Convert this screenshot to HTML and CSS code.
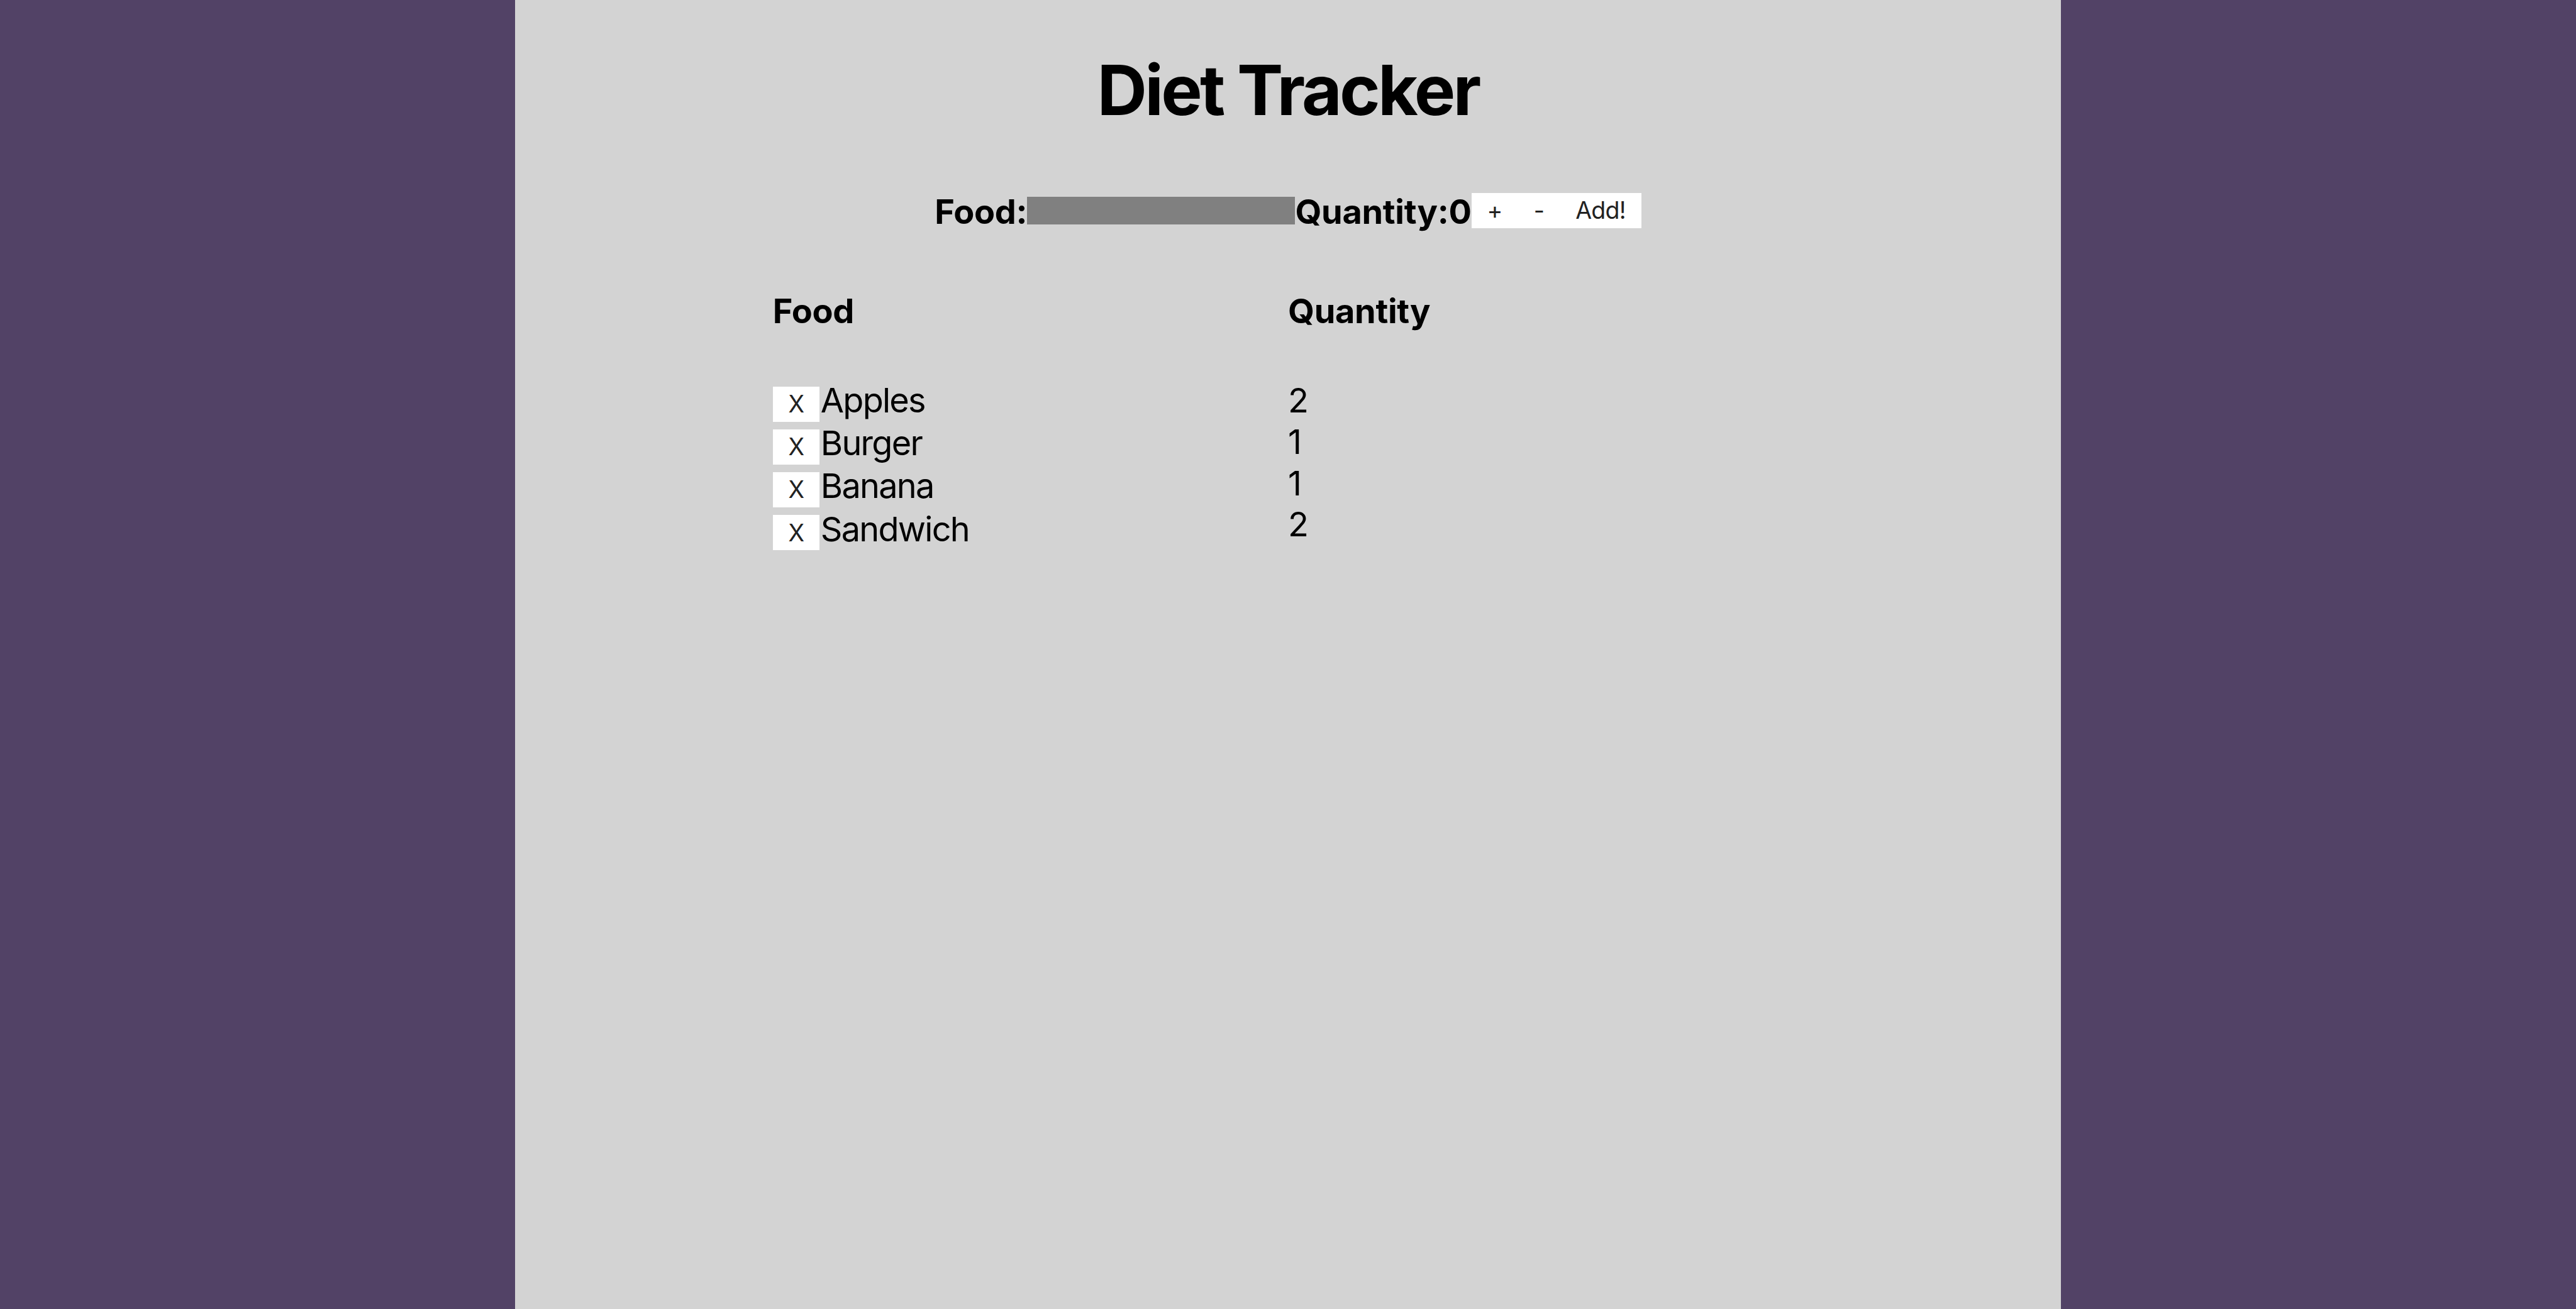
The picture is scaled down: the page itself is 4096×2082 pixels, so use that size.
FILE: index.html
```html
<!DOCTYPE html>
<html lang="en">
<head>
<meta charset="utf-8">
<title>Diet Tracker</title>
<link rel="stylesheet" href="styles.css">
</head>
<body>
<main class="panel">
  <h1 class="title">Diet Tracker</h1>
  <form class="entry">
    <label class="label" for="food">Food:</label>
    <input class="food-input" id="food" type="text">
    <span class="label">Quantity:0</span>
    <div class="btn-group">
      <button type="button" class="btn">+</button>
      <button type="button" class="btn">-</button>
      <button type="button" class="btn">Add!</button>
    </div>
  </form>
  <section class="lists">
    <div class="col">
      <h2 class="col-head">Food</h2>
      <ul class="food-list">
        <li class="food-item"><button type="button" class="btn">X</button><span class="food-name">Apples</span></li>
        <li class="food-item"><button type="button" class="btn">X</button><span class="food-name">Burger</span></li>
        <li class="food-item"><button type="button" class="btn">X</button><span class="food-name">Banana</span></li>
        <li class="food-item"><button type="button" class="btn">X</button><span class="food-name">Sandwich</span></li>
      </ul>
    </div>
    <div class="col">
      <h2 class="col-head">Quantity</h2>
      <ul class="qty-list">
        <li class="qty-item">2</li>
        <li class="qty-item">1</li>
        <li class="qty-item">1</li>
        <li class="qty-item">2</li>
      </ul>
    </div>
  </section>
</main>
</body>
</html>
```

FILE: styles.css
```css
html, body {
  margin: 0;
  padding: 0;
}

body {
  background: #524266;
  font-family: Inter, "Noto Sans", "Liberation Sans", sans-serif;
  font-size: 54px;
  letter-spacing: -0.032em;
  color: #000;
}

.panel {
  width: 60%;
  margin: 0 auto;
  min-height: 100vh;
  background: #d3d3d3;
  padding-top: 77px;
  box-sizing: border-box;
}

.title {
  margin: 0;
  font-size: 110px;
  line-height: 133px;
  font-weight: 700;
  letter-spacing: -0.034em;
  text-align: center;
}

.entry {
  margin: 94px 0 0;
  display: flex;
  justify-content: center;
  align-items: center;
  height: 65px;
}

.label {
  font-weight: 700;
  line-height: 65px;
  letter-spacing: -0.005em;
}

.food-input {
  width: 426px;
  height: 44px;
  margin: -4px 0 0;
  padding: 0;
  border: none;
  background: #808080;
  box-sizing: border-box;
  font: inherit;
}

.btn-group {
  display: flex;
  background: #fff;
  margin-top: -4px;
}

.btn {
  height: 56px;
  padding: 0 25px;
  border: none;
  margin: 0;
  background: #fff;
  color: #222;
  font-family: Inter, "Noto Sans", sans-serif;
  font-size: 37.5px;
  letter-spacing: -0.02em;
  line-height: 45px;
}

.lists {
  width: 66.667%;
  margin: 93px auto 0;
  display: grid;
  grid-template-columns: 1fr 1fr;
}

.col-head {
  margin: 0;
  font-size: 54px;
  line-height: 65px;
  font-weight: 700;
  letter-spacing: -0.005em;
}

.food-list,
.qty-list {
  list-style: none;
  margin: 77px 0 0;
  padding: 0;
}

.food-list {
  display: flex;
  flex-direction: column;
  gap: 1.7px;
}

.food-item {
  display: flex;
  align-items: baseline;
  line-height: 65px;
}

.food-item .btn {
  padding: 0 24px;
  width: 74px;
}

.food-name {
  margin-left: 2px;
}

.qty-item {
  line-height: 65.8px;
}
```
